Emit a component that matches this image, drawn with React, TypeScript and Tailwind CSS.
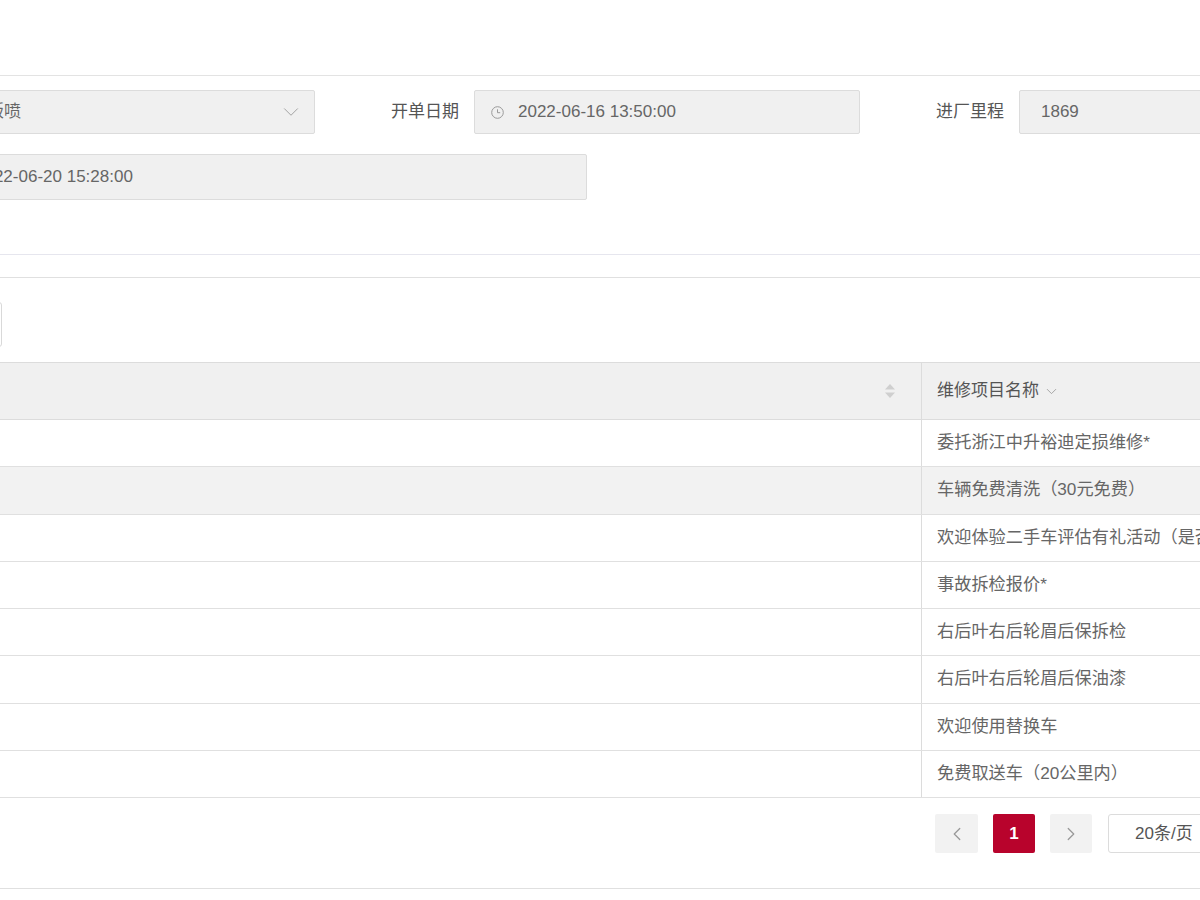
import { ChevronDown, ChevronLeft, ChevronRight } from "lucide-react";

const repairItems = [
  "委托浙江中升裕迪定损维修*",
  "车辆免费清洗（30元免费）",
  "欢迎体验二手车评估有礼活动（是否参加）",
  "事故拆检报价*",
  "右后叶右后轮眉后保拆检",
  "右后叶右后轮眉后保油漆",
  "欢迎使用替换车",
  "免费取送车（20公里内）",
];

function ClockIcon() {
  return (
    <svg width="13" height="13" viewBox="0 0 13 13" fill="none" className="shrink-0">
      <circle cx="6.5" cy="6.5" r="5.8" stroke="#999" strokeWidth="1" />
      <path d="M6.5 3.3V6.7H9.2" stroke="#999" strokeWidth="1" />
    </svg>
  );
}

function SortIcon() {
  return (
    <svg width="12" height="16" viewBox="0 0 12 16" className="shrink-0">
      <path d="M6 1L11 6.5H1Z" fill="#cfcfcf" />
      <path d="M6 15L11 9.5H1Z" fill="#cfcfcf" />
    </svg>
  );
}

function FormLabel({ children }: { children: string }) {
  return (
    <div className="flex w-[159px] shrink-0 items-center justify-end pr-[15px] text-[17px] text-[#555]">
      {children}
    </div>
  );
}

export default function App() {
  return (
    <div
      className="h-[900px] w-[1200px] overflow-hidden bg-white text-[#666]"
      style={{ fontFamily: '"Liberation Sans", "Noto Sans CJK SC", sans-serif' }}
    >
      <div className="ml-[-230px] w-[1700px]">
        <div className="h-[76px] border-b border-[#e3e3e3]" />

        {/* 工单信息 */}
        <div className="h-[179px] border-b border-[#e6e6ee] pt-[14px]">
          <div className="flex h-[44px]">
            <FormLabel>维修类型</FormLabel>
            <div className="flex w-[386px] items-center justify-between rounded-[2px] border border-[#dcdcdc] bg-[#f0f0f0] pl-[23px] pr-[10px] text-[17px]">
              <span>事故钣喷</span>
              <ChevronDown size={26} strokeWidth={0.9} color="#a0a0a0" />
            </div>

            <FormLabel>开单日期</FormLabel>
            <div className="flex w-[386px] items-center gap-[14px] rounded-[2px] border border-[#dcdcdc] bg-[#f0f0f0] pl-[16px] text-[17px]">
              <ClockIcon />
              <span>2022-06-16 13:50:00</span>
            </div>

            <FormLabel>进厂里程</FormLabel>
            <div className="flex w-[386px] items-center rounded-[2px] border border-[#dcdcdc] bg-[#f0f0f0] pl-[21px] text-[17px]">
              1869
            </div>
          </div>

          <div className="mt-[20px] flex h-[46px]">
            <FormLabel>预计交车</FormLabel>
            <div className="flex w-[658px] items-center gap-[16px] rounded-[2px] border border-[#dcdcdc] bg-[#f0f0f0] pl-[16px] text-[17px]">
              <ClockIcon />
              <span>2022-06-20 15:28:00</span>
            </div>
          </div>
        </div>

        {/* 维修项目 */}
        <div className="mt-[22px] border-t border-[#e0e0e0] pt-[24px]">
          <div className="ml-[132px] flex h-[45px] w-[100px] items-center justify-center rounded-[3px] border border-[#d9d9d9] text-[17px]">
            新增
          </div>

          <div className="mt-[15px]">
            <div className="flex h-[58px] border-y border-[#dcdcdc] bg-[#f0f0f0]">
              <div className="flex w-[1152px] items-center justify-end border-r border-[#dcdcdc] pr-[25px]">
                <SortIcon />
              </div>
              <div className="flex items-center gap-[4px] pl-[15px] text-[17px] text-[#555]">
                维修项目名称
                <ChevronDown size={17} strokeWidth={1.2} color="#999" />
              </div>
            </div>

            {repairItems.map((item, index) => (
              <div
                key={item}
                className={`flex h-[47.25px] border-b border-[#e0e0e0] ${index === 1 ? "bg-[#f2f2f2]" : "bg-white"}`}
              >
                <div className="w-[1152px] border-r border-[#dcdcdc]" />
                <div className="flex items-center whitespace-nowrap pl-[15px] text-[17.2px]">{item}</div>
              </div>
            ))}
          </div>

          <div className="mt-[16px] flex h-[75px] items-start border-b border-[#e0e0e0] pl-[1165px]">
            <div className="flex h-[39px] w-[43px] items-center justify-center rounded-[2px] bg-[#f2f2f2]">
              <ChevronLeft size={22} strokeWidth={1.4} color="#999" />
            </div>
            <div className="ml-[15px] flex h-[39px] w-[42px] items-center justify-center rounded-[2px] bg-[#b8032c] text-[17px] font-bold text-white">
              1
            </div>
            <div className="ml-[15px] flex h-[39px] w-[42px] items-center justify-center rounded-[2px] bg-[#f2f2f2]">
              <ChevronRight size={22} strokeWidth={1.4} color="#999" />
            </div>
            <div className="ml-[16px] flex h-[39px] w-[120px] items-center rounded-[3px] border border-[#dcdcdc] pl-[26px] text-[17px] text-[#555]">
              20条/页
            </div>
          </div>
        </div>
      </div>
    </div>
  );
}
